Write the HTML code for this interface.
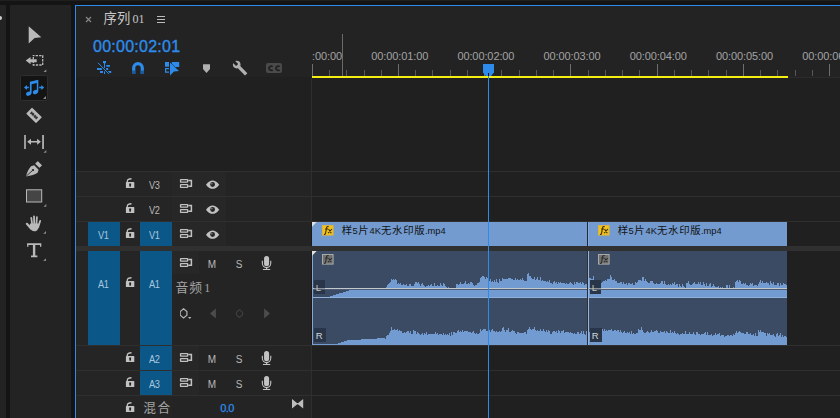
<!DOCTYPE html>
<html><head><meta charset="utf-8">
<style>
html,body{margin:0;padding:0;background:#141414;}
body{width:840px;height:418px;position:relative;overflow:hidden;font-family:"Liberation Sans",sans-serif;}
.abs{position:absolute;}
div{position:absolute;box-sizing:border-box;}
.rl{top:10px;width:80px;text-align:center;font-size:11px;color:#a3a3a3;line-height:12px;white-space:nowrap;letter-spacing:-0.1px;}
.tl{font-size:10px;color:#b8b8b8;line-height:12px;text-align:left;width:32px;letter-spacing:-0.3px;transform:scaleX(0.92);transform-origin:0 0;}
.ms{font-size:10px;color:#b8b8b8;line-height:12px;text-align:center;width:14px;}
.hl{left:76px;width:764px;height:1px;background:#2f2f2f;}
</style></head><body>
<!-- top strip -->
<div style="left:0;top:0;width:840px;height:1px;background:#1f1f1f"></div>
<!-- left partial panel -->
<div style="left:0;top:5px;width:6px;height:413px;background:#232323"></div>
<div style="left:0;top:16px;width:2px;height:4px;background:#cfcfcf;border-radius:0 2px 2px 0"></div>
<!-- tools panel -->
<div style="left:10px;top:5px;width:61px;height:413px;background:#232323"></div>
<!-- timeline panel -->
<div style="left:75px;top:5px;width:770px;height:420px;background:#232323;border:1px solid #2d8ceb"></div>
<!-- track area bg -->
<div style="left:76px;top:77px;width:764px;height:341px;background:#202020"></div>
<div style="left:76px;top:172px;width:235px;height:246px;background:#252525"></div>
<div style="left:172px;top:172px;width:139px;height:246px;background:#242424"></div>
<div style="left:172px;top:172px;width:54px;height:74px;background:#272727"></div>
<div style="left:172px;top:251px;width:27px;height:23px;background:#272727"></div>
<div style="left:172px;top:346px;width:27px;height:49px;background:#272727"></div>
<div style="left:311px;top:78px;width:1px;height:340px;background:#2e2e2e"></div>

<!-- tab header -->
<svg class="abs" style="left:85px;top:16px" width="8" height="8"><path d="M1,1L6,6M6,1L1,6" stroke="#8a8a8a" stroke-width="1.1" fill="none"/></svg>
<svg class="abs" style="left:0;top:0" width="840" height="418" fill="#c8c8c8"><text x="103.59 116.90" y="23.1" font-size="13.3" font-family="'Liberation Sans','Noto Sans CJK SC',sans-serif">序列</text></svg>
<div style="left:132.5px;top:12px;font-family:'Liberation Serif',serif;font-size:12px;color:#c8c8c8;line-height:14px">01</div>
<svg class="abs" style="left:157px;top:15px" width="9" height="9"><path d="M0,1.5H8M0,4.5H8M0,7.5H8" stroke="#bdbdbd" stroke-width="1.1"/></svg>
<div id="tc" style="left:93px;top:37.5px;font-size:16px;color:#2d8ceb;line-height:18px;letter-spacing:0.25px;-webkit-text-stroke:0.35px #2d8ceb">00:00:02:01</div>

<!-- timeline toolbar icons -->
<svg class="abs" style="left:96px;top:60px" width="17" height="16">
 <g fill="#2d8ceb">
 <rect x="8" y="1" width="1" height="13"/>
 <rect x="7" y="1" width="3" height="2.2"/>
 <rect x="10.3" y="5" width="3.6" height="1.8"/>
 <rect x="1" y="8" width="5" height="2"/>
 <rect x="10" y="8" width="2.2" height="2"/>
 <rect x="4" y="11" width="3" height="2"/>
 <rect x="12" y="11" width="3.2" height="2"/>
 </g>
 <path d="M2,2.8L12.8,13.9" stroke="#232323" stroke-width="2.6"/>
 <path d="M2,2.8L12.8,13.9" stroke="#2d8ceb" stroke-width="1"/>
 <rect x="8" y="3" width="1" height="5" fill="#2d8ceb"/>
</svg>
<svg class="abs" style="left:131px;top:61px" width="15" height="14" fill="none">
 <path d="M2.7,13V7A4.3,4.3 0 0 1 11.3,7V13" stroke="#2d8ceb" stroke-width="3.2"/>
 <rect x="1" y="9.6" width="3.4" height="3.4" fill="#1c5a9c"/><rect x="9.6" y="9.6" width="3.4" height="3.4" fill="#1c5a9c"/>
</svg>
<svg class="abs" style="left:164px;top:61px" width="17" height="16">
 <rect x="1" y="1" width="4" height="4.7" fill="#2d8ceb"/>
 <path d="M5,7.7H1.6V11.2H5" fill="none" stroke="#2d8ceb" stroke-width="1.2"/>
 <rect x="7.8" y="1" width="7.4" height="5" fill="#2d8ceb"/>
 <path d="M6,1.5L15,10L10,10.5L6,14.5Z" fill="#2d8ceb" stroke="#232323" stroke-width="1" paint-order="stroke"/>
</svg>
<svg class="abs" style="left:202px;top:64px" width="9" height="10"><path d="M1.3,0.2H7.7Q8,0.2 8,0.6V5L4.5,9L1,5V0.6Q1,0.2 1.3,0.2Z" fill="#b0b0b0"/></svg>
<svg class="abs" style="left:232px;top:60px" width="16" height="16" fill="none">
 <path d="M6.3,6.3L14.2,14.4" stroke="#b0b0b0" stroke-width="3.3"/>
 <circle cx="4.7" cy="4.6" r="3.8" fill="#b0b0b0"/>
 <rect x="-1.5" y="-6" width="3" height="6.6" fill="#232323" transform="translate(4.7,4.6) rotate(-45)"/>
</svg>
<svg class="abs" style="left:266px;top:63px" width="16" height="10">
 <rect x="0" y="0" width="16" height="10" rx="2" fill="#4a4a4a"/>
 <path d="M6.7,3.7A2.25,2.1 0 1 0 6.7,6.8M13.7,3.7A2.25,2.1 0 1 0 13.7,6.8" fill="none" stroke="#202020" stroke-width="1.7"/>
</svg>

<!-- ruler -->
<svg class="abs" style="left:0;top:0" width="840" height="418">
 <rect x="312" y="64" width="1" height="12" fill="#6e6e6e"/><rect x="329" y="70" width="1" height="6" fill="#585858"/><rect x="346" y="70" width="1" height="6" fill="#585858"/><rect x="364" y="70" width="1" height="6" fill="#585858"/><rect x="381" y="70" width="1" height="6" fill="#585858"/><rect x="398" y="64" width="1" height="12" fill="#6e6e6e"/><rect x="415" y="70" width="1" height="6" fill="#585858"/><rect x="432" y="70" width="1" height="6" fill="#585858"/><rect x="450" y="70" width="1" height="6" fill="#585858"/><rect x="467" y="70" width="1" height="6" fill="#585858"/><rect x="484" y="64" width="1" height="12" fill="#6e6e6e"/><rect x="501" y="70" width="1" height="6" fill="#585858"/><rect x="519" y="70" width="1" height="6" fill="#585858"/><rect x="536" y="70" width="1" height="6" fill="#585858"/><rect x="553" y="70" width="1" height="6" fill="#585858"/><rect x="570" y="64" width="1" height="12" fill="#6e6e6e"/><rect x="588" y="70" width="1" height="6" fill="#585858"/><rect x="605" y="70" width="1" height="6" fill="#585858"/><rect x="622" y="70" width="1" height="6" fill="#585858"/><rect x="639" y="70" width="1" height="6" fill="#585858"/><rect x="657" y="64" width="1" height="12" fill="#6e6e6e"/><rect x="674" y="70" width="1" height="6" fill="#585858"/><rect x="691" y="70" width="1" height="6" fill="#585858"/><rect x="708" y="70" width="1" height="6" fill="#585858"/><rect x="726" y="70" width="1" height="6" fill="#585858"/><rect x="743" y="64" width="1" height="12" fill="#6e6e6e"/><rect x="760" y="70" width="1" height="6" fill="#585858"/><rect x="777" y="70" width="1" height="6" fill="#585858"/><rect x="795" y="70" width="1" height="6" fill="#585858"/><rect x="812" y="70" width="1" height="6" fill="#585858"/><rect x="829" y="64" width="1" height="12" fill="#6e6e6e"/>
 <rect x="342" y="34" width="1" height="42" fill="#6a6a6a"/>
 <rect x="312" y="76" width="476" height="2" fill="#f5ee14"/>
 <rect x="788" y="77" width="52" height="1" fill="#2c2c2c"/>
</svg>
<div style="left:312px;top:40px;width:528px;height:30px;overflow:hidden"><div class="rl" style="left:-38.5px">00:00:00:00</div><div class="rl" style="left:47.7px">00:00:01:00</div><div class="rl" style="left:133.9px">00:00:02:00</div><div class="rl" style="left:220.1px">00:00:03:00</div><div class="rl" style="left:306.3px">00:00:04:00</div><div class="rl" style="left:392.5px">00:00:05:00</div><div class="rl" style="left:478.7px">00:00:06:00</div></div>

<!-- track lines -->
<div class="hl" style="top:171px"></div>
<div class="hl" style="top:196px"></div>
<div class="hl" style="top:221px"></div>
<div style="left:76px;top:246px;width:764px;height:5px;background:#303030"></div>
<div class="hl" style="top:345px"></div>
<div class="hl" style="top:370px"></div>
<div class="hl" style="top:395px"></div>

<!-- selected track blocks -->
<div style="left:88px;top:222px;width:32px;height:24px;background:#0b5788"></div>
<div style="left:140px;top:222px;width:32px;height:24px;background:#0b5788"></div>
<div style="left:88px;top:251px;width:32px;height:94px;background:#0b5788"></div>
<div style="left:140px;top:251px;width:32px;height:94px;background:#0b5788"></div>
<div style="left:140px;top:346px;width:32px;height:24px;background:#0b5788"></div>
<div style="left:140px;top:371px;width:32px;height:24px;background:#0b5788"></div>

<div class="tl" style="left:149.0px;top:180px">V3</div>
<div class="tl" style="left:149.0px;top:205px">V2</div>
<div class="tl" style="left:98.2px;top:230px;color:#a9c6de">V1</div>
<div class="tl" style="left:149.0px;top:230px;color:#a9c6de">V1</div>
<div class="tl" style="left:98.2px;top:279px;color:#a9c6de">A1</div>
<div class="tl" style="left:149.0px;top:279px;color:#a9c6de">A1</div>
<div class="tl" style="left:149.0px;top:354px;color:#a9c6de">A2</div>
<div class="tl" style="left:149.0px;top:379px;color:#a9c6de">A3</div>

<svg class="abs" style="left:0;top:0" width="840" height="418">
<defs>
 <g id="lock"><path d="M1.3,4.6V3.3C1.3,1.6 2.9,0.75 5.5,0.75" fill="none" stroke="#c2c2c2" stroke-width="1.3"/><rect x="-0.1" y="4.1" width="8.4" height="5.9" rx="0.6" fill="#c2c2c2"/><path d="M3.2,5.4H5.1V6.7L4.8,8.7H3.5L3.2,6.7Z" fill="#1c1c1c"/></g>
 <g id="sync" fill="none" stroke="#c2c2c2" stroke-width="1.3"><rect x="0.55" y="0.65" width="7.1" height="2.5" rx="0.4"/><rect x="0.55" y="5.55" width="7.1" height="2.8" rx="0.4"/><path d="M8.3,1.5H11.4V7.2H8.3" stroke-width="1.5"/></g>
 <g id="eye"><path d="M0,4.15C2.2,1 4.6,0 6.6,0C8.6,0 11,1 13.2,4.15C11,7.3 8.6,8.3 6.6,8.3C4.6,8.3 2.2,7.3 0,4.15Z" fill="#c2c2c2"/><circle cx="6.6" cy="4" r="2.4" fill="#262626"/><circle cx="5.9" cy="3.3" r="0.8" fill="#8a8a8a"/></g>
 <g id="mic"><rect x="2.05" y="0" width="5.05" height="10.3" rx="2.5" fill="#c2c2c2"/><path d="M0.35,4.8V7.3A4.2,4.3 0 0 0 8.75,7.3V4.8" fill="none" stroke="#c2c2c2" stroke-width="1.1"/><rect x="4" y="12" width="1.2" height="1.3" fill="#c2c2c2"/><rect x="0.9" y="13" width="7.3" height="1" fill="#c2c2c2"/></g>
</defs>
<use href="#lock" x="126" y="178"/><use href="#lock" x="126" y="203"/><use href="#lock" x="126" y="228"/>
<use href="#lock" x="126" y="277"/><use href="#lock" x="126" y="352"/><use href="#lock" x="126" y="377"/><use href="#lock" x="126" y="402"/>
<use href="#sync" x="180" y="179"/><use href="#sync" x="180" y="204"/><use href="#sync" x="180" y="229"/>
<use href="#sync" x="180" y="258"/><use href="#sync" x="180" y="353"/><use href="#sync" x="180" y="378"/>
<use href="#eye" x="206" y="180.5"/><use href="#eye" x="206" y="205.5"/><use href="#eye" x="206" y="230.5"/>
<use href="#mic" x="262" y="256"/><use href="#mic" x="262" y="351"/><use href="#mic" x="262" y="376"/>
</svg>
<div class="ms" style="left:205px;top:259px">M</div><div class="ms" style="left:232px;top:259px">S</div>
<div class="ms" style="left:205px;top:354px">M</div><div class="ms" style="left:232px;top:354px">S</div>
<div class="ms" style="left:205px;top:379px">M</div><div class="ms" style="left:232px;top:379px">S</div>

<svg class="abs" style="left:0;top:0" width="840" height="418" fill="#a4a4a4"><text x="175.40 189.13" y="291.96" font-size="12.8" font-family="'Liberation Sans','Noto Sans CJK SC',sans-serif">音频</text></svg>
<div style="left:204.3px;top:281px;font-family:'Liberation Serif',serif;font-size:12px;color:#a4a4a4;line-height:14px">1</div>
<!-- keyframe controls -->
<svg class="abs" style="left:180px;top:307px" width="100" height="14">
 <path d="M3.55,1.7L6.9,4.5V8.1L3.55,10.9L0.2,8.1V4.5Z" fill="none" stroke="#b4b4b4" stroke-width="1.2"/>
 <path d="M8,10H11.4L9.7,12Z" fill="#b4b4b4"/>
 <path d="M35.9,1.5V11.6L30,6.55Z" fill="#4c4c4c"/>
 <path d="M59.45,2.6L62.5,5.2V7.8L59.45,10.4L56.4,7.8V5.2Z" fill="none" stroke="#3e3e3e" stroke-width="1.2"/>
 <path d="M84.1,1.5V11.6L90,6.55Z" fill="#4c4c4c"/>
</svg>
<svg class="abs" style="left:0;top:0" width="840" height="418" fill="#a4a4a4"><text x="143.35 157.39" y="411.6" font-size="12.7" font-family="'Liberation Sans','Noto Sans CJK SC',sans-serif">混合</text></svg>
<div style="left:220.3px;top:402px;font-size:11px;color:#2d8ceb;line-height:12px;letter-spacing:-0.6px;-webkit-text-stroke:0.25px #2d8ceb">0.0</div>
<svg class="abs" style="left:291.9px;top:399px" width="12" height="10"><path d="M0,0L5.3,4.2V5.2L0,9.4ZM11.2,0L5.9,4.2V5.2L11.2,9.4Z" fill="#bdbdbd"/><rect x="5" y="4.1" width="1.2" height="1.2" fill="#bdbdbd"/></svg>

<!-- video clips -->
<div style="left:311px;top:222px;width:1px;height:24px;background:#1a1a1a"></div><div style="left:311px;top:251px;width:1px;height:94px;background:#1a1a1a"></div>
<div style="left:312px;top:222px;width:276px;height:24px;background:#739bd0"></div>
<div style="left:588px;top:222px;width:199px;height:24px;background:#739bd0"></div>
<div style="left:587px;top:222px;width:1px;height:24px;background:#232a35"></div><div style="left:588px;top:222px;width:1px;height:24px;background:#86aadb"></div>
<svg class="abs" style="left:312px;top:222px" width="6" height="6"><path d="M0,0H4.7L0,4.7Z" fill="#e2e2e2"/></svg>
<!-- fx badges -->
<svg class="abs" style="left:322.2px;top:225.1px" width="13" height="12"><rect x="0.5" y="0.5" width="10.6" height="9.6" fill="#f2c11a" stroke="#d9b443"/><path d="M6.7,1.7C5.3,1.1 4.7,1.9 4.5,3.2L3.6,8C3.4,9.2 2.9,9.6 2,9.3M3.1,4H6M6.5,4L9.3,8.2M9.9,4L6.1,8.2" fill="none" stroke="#3d2f05" stroke-width="1.1"/></svg>
<svg class="abs" style="left:598.2px;top:225.1px" width="13" height="12"><rect x="0.5" y="0.5" width="10.6" height="9.6" fill="#f2c11a" stroke="#d9b443"/><path d="M6.7,1.7C5.3,1.1 4.7,1.9 4.5,3.2L3.6,8C3.4,9.2 2.9,9.6 2,9.3M3.1,4H6M6.5,4L9.3,8.2M9.9,4L6.1,8.2" fill="none" stroke="#3d2f05" stroke-width="1.1"/></svg>

<!-- audio clips -->
<div style="left:312px;top:251px;width:475px;height:94px;background:#3a4b63"></div>
<svg class="abs" style="left:0;top:0" width="840" height="418" shape-rendering="crispEdges">
 <path d="M312,298L312,297.0L313,297.0L313,297.0L314,297.0L314,297.0L315,297.0L315,297.0L316,297.0L316,297.0L317,297.0L317,297.0L318,297.0L318,297.0L319,297.0L319,297.0L320,297.0L320,297.0L321,297.0L321,297.0L322,297.0L322,297.0L323,297.0L323,297.0L324,297.0L324,297.0L325,297.0L325,297.0L326,297.0L326,297.0L327,297.0L327,297.0L328,297.0L328,296.9L329,296.9L329,296.6L330,296.6L330,296.3L331,296.3L331,295.9L332,295.9L332,295.6L333,295.6L333,295.3L334,295.3L334,295.0L335,295.0L335,294.7L336,294.7L336,294.4L337,294.4L337,294.1L338,294.1L338,293.8L339,293.8L339,293.4L340,293.4L340,293.1L341,293.1L341,292.8L342,292.8L342,292.5L343,292.5L343,292.2L344,292.2L344,291.9L345,291.9L345,291.6L346,291.6L346,291.3L347,291.3L347,290.9L348,290.9L348,290.6L349,290.6L349,290.3L350,290.3L350,290.0L351,290.0L351,290.0L352,290.0L352,290.0L353,290.0L353,290.0L354,290.0L354,290.0L355,290.0L355,290.0L356,290.0L356,290.0L357,290.0L357,290.0L358,290.0L358,290.0L359,290.0L359,290.0L360,290.0L360,290.0L361,290.0L361,290.0L362,290.0L362,290.0L363,290.0L363,290.0L364,290.0L364,290.0L365,290.0L365,290.0L366,290.0L366,290.0L367,290.0L367,290.0L368,290.0L368,290.0L369,290.0L369,290.0L370,290.0L370,290.0L371,290.0L371,290.0L372,290.0L372,290.0L373,290.0L373,290.0L374,290.0L374,290.0L375,290.0L375,290.0L376,290.0L376,290.0L377,290.0L377,290.0L378,290.0L378,290.0L379,290.0L379,290.0L380,290.0L380,290.0L381,290.0L381,290.0L382,290.0L382,290.0L383,290.0L383,290.0L384,290.0L384,290.0L385,290.0L385,289.7L386,289.7L386,286.9L387,286.9L387,284.9L388,284.9L388,284.3L389,284.3L389,282.8L390,282.8L390,282.3L391,282.3L391,279.3L392,279.3L392,279.6L393,279.6L393,279.1L394,279.1L394,280.0L395,280.0L395,279.4L396,279.4L396,279.8L397,279.8L397,283.9L398,283.9L398,283.2L399,283.2L399,284.0L400,284.0L400,283.3L401,283.3L401,284.9L402,284.9L402,285.1L403,285.1L403,283.8L404,283.8L404,285.3L405,285.3L405,285.1L406,285.1L406,283.8L407,283.8L407,286.1L408,286.1L408,285.5L409,285.5L409,284.4L410,284.4L410,283.7L411,283.7L411,285.5L412,285.5L412,285.8L413,285.8L413,285.7L414,285.7L414,283.6L415,283.6L415,282.0L416,282.0L416,282.1L417,282.1L417,282.7L418,282.7L418,282.0L419,282.0L419,284.3L420,284.3L420,285.6L421,285.6L421,284.2L422,284.2L422,283.3L423,283.3L423,285.2L424,285.2L424,285.7L425,285.7L425,286.7L426,286.7L426,285.7L427,285.7L427,285.7L428,285.7L428,285.3L429,285.3L429,285.8L430,285.8L430,284.9L431,284.9L431,283.6L432,283.6L432,285.7L433,285.7L433,285.5L434,285.5L434,282.6L435,282.6L435,285.8L436,285.8L436,285.8L437,285.8L437,284.8L438,284.8L438,285.9L439,285.9L439,285.5L440,285.5L440,282.7L441,282.7L441,285.1L442,285.1L442,285.5L443,285.5L443,283.4L444,283.4L444,283.9L445,283.9L445,286.3L446,286.3L446,287.0L447,287.0L447,288.3L448,288.3L448,287.4L449,287.4L449,288.5L450,288.5L450,287.9L451,287.9L451,288.0L452,288.0L452,288.1L453,288.1L453,288.0L454,288.0L454,288.1L455,288.1L455,289.0L456,289.0L456,283.8L457,283.8L457,283.9L458,283.9L458,285.4L459,285.4L459,284.0L460,284.0L460,281.8L461,281.8L461,284.0L462,284.0L462,284.0L463,284.0L463,283.8L464,283.8L464,282.8L465,282.8L465,281.1L466,281.1L466,283.7L467,283.7L467,284.0L468,284.0L468,283.3L469,283.3L469,284.1L470,284.1L470,282.3L471,282.3L471,282.2L472,282.2L472,282.6L473,282.6L473,284.9L474,284.9L474,285.9L475,285.9L475,285.4L476,285.4L476,285.4L477,285.4L477,282.5L478,282.5L478,282.7L479,282.7L479,282.4L480,282.4L480,278.2L481,278.2L481,277.2L482,277.2L482,276.4L483,276.4L483,275.7L484,275.7L484,277.2L485,277.2L485,279.0L486,279.0L486,276.6L487,276.6L487,278.2L488,278.2L488,280.6L489,280.6L489,281.0L490,281.0L490,278.5L491,278.5L491,282.0L492,282.0L492,280.8L493,280.8L493,282.4L494,282.4L494,279.5L495,279.5L495,282.3L496,282.3L496,278.9L497,278.9L497,281.9L498,281.9L498,283.1L499,283.1L499,278.7L500,278.7L500,281.2L501,281.2L501,281.1L502,281.1L502,277.6L503,277.6L503,278.6L504,278.6L504,278.7L505,278.7L505,278.7L506,278.7L506,278.8L507,278.8L507,278.5L508,278.5L508,277.8L509,277.8L509,278.4L510,278.4L510,278.2L511,278.2L511,279.2L512,279.2L512,278.7L513,278.7L513,279.5L514,279.5L514,279.6L515,279.6L515,278.0L516,278.0L516,279.7L517,279.7L517,279.2L518,279.2L518,280.3L519,280.3L519,280.4L520,280.4L520,278.7L521,278.7L521,280.0L522,280.0L522,278.3L523,278.3L523,280.3L524,280.3L524,281.0L525,281.0L525,281.4L526,281.4L526,281.3L527,281.3L527,274.2L528,274.2L528,273.2L529,273.2L529,275.9L530,275.9L530,276.0L531,276.0L531,277.9L532,277.9L532,278.5L533,278.5L533,279.0L534,279.0L534,277.2L535,277.2L535,279.5L536,279.5L536,279.3L537,279.3L537,277.2L538,277.2L538,280.0L539,280.0L539,279.9L540,279.9L540,277.0L541,277.0L541,280.7L542,280.7L542,280.1L543,280.1L543,281.1L544,281.1L544,280.6L545,280.6L545,280.6L546,280.6L546,281.8L547,281.8L547,280.7L548,280.7L548,282.2L549,282.2L549,280.3L550,280.3L550,282.6L551,282.6L551,282.7L552,282.7L552,283.6L553,283.6L553,282.3L554,282.3L554,280.6L555,280.6L555,282.9L556,282.9L556,282.0L557,282.0L557,284.1L558,284.1L558,281.7L559,281.7L559,283.3L560,283.3L560,282.1L561,282.1L561,283.4L562,283.4L562,283.4L563,283.4L563,282.8L564,282.8L564,282.5L565,282.5L565,284.3L566,284.3L566,282.7L567,282.7L567,283.5L568,283.5L568,283.6L569,283.6L569,283.3L570,283.3L570,281.7L571,281.7L571,282.9L572,282.9L572,284.3L573,284.3L573,284.5L574,284.5L574,281.9L575,281.9L575,283.6L576,283.6L576,281.7L577,281.7L577,281.5L578,281.5L578,283.0L579,283.0L579,283.4L580,283.4L580,282.3L581,282.3L581,283.5L582,283.5L582,282.2L583,282.2L583,283.4L584,283.4L584,284.9L585,284.9L585,283.9L586,283.9L586,283.8L587,283.8L587,284.0L588,284.0L588,275.9L589,275.9L589,278.0L590,278.0L590,278.3L591,278.3L591,278.8L592,278.8L592,279.0L593,279.0L593,276.1L594,276.1L594,279.6L595,279.6L595,279.8L596,279.8L596,280.4L597,280.4L597,280.0L598,280.0L598,280.9L599,280.9L599,281.3L600,281.3L600,281.6L601,281.6L601,282.9L602,282.9L602,281.9L603,281.9L603,281.3L604,281.3L604,280.5L605,280.5L605,280.2L606,280.2L606,281.0L607,281.0L607,278.6L608,278.6L608,278.8L609,278.8L609,278.7L610,278.7L610,275.1L611,275.1L611,276.9L612,276.9L612,279.5L613,279.5L613,279.6L614,279.6L614,279.0L615,279.0L615,280.9L616,280.9L616,280.7L617,280.7L617,283.4L618,283.4L618,282.8L619,282.8L619,283.1L620,283.1L620,282.4L621,282.4L621,282.3L622,282.3L622,284.1L623,284.1L623,282.0L624,282.0L624,283.6L625,283.6L625,284.2L626,284.2L626,282.8L627,282.8L627,284.7L628,284.7L628,282.9L629,282.9L629,282.9L630,282.9L630,284.0L631,284.0L631,284.1L632,284.1L632,282.8L633,282.8L633,284.5L634,284.5L634,284.8L635,284.8L635,282.2L636,282.2L636,283.2L637,283.2L637,282.3L638,282.3L638,280.0L639,280.0L639,279.6L640,279.6L640,279.9L641,279.9L641,280.7L642,280.7L642,277.4L643,277.4L643,277.2L644,277.2L644,281.1L645,281.1L645,279.2L646,279.2L646,281.3L647,281.3L647,282.3L648,282.3L648,282.6L649,282.6L649,282.8L650,282.8L650,280.7L651,280.7L651,280.8L652,280.8L652,280.5L653,280.5L653,283.3L654,283.3L654,283.8L655,283.8L655,283.7L656,283.7L656,283.2L657,283.2L657,284.0L658,284.0L658,283.8L659,283.8L659,284.1L660,284.1L660,282.7L661,282.7L661,281.2L662,281.2L662,281.4L663,281.4L663,283.9L664,283.9L664,280.8L665,280.8L665,284.1L666,284.1L666,285.3L667,285.3L667,284.5L668,284.5L668,284.4L669,284.4L669,284.6L670,284.6L670,284.1L671,284.1L671,284.6L672,284.6L672,282.5L673,282.5L673,284.0L674,284.0L674,282.4L675,282.4L675,284.9L676,284.9L676,284.0L677,284.0L677,284.0L678,284.0L678,286.9L679,286.9L679,284.2L680,284.2L680,285.7L681,285.7L681,286.5L682,286.5L682,283.7L683,283.7L683,286.0L684,286.0L684,286.8L685,286.8L685,287.6L686,287.6L686,283.3L687,283.3L687,282.7L688,282.7L688,280.7L689,280.7L689,284.0L690,284.0L690,284.6L691,284.6L691,284.5L692,284.5L692,283.8L693,283.8L693,283.0L694,283.0L694,282.2L695,282.2L695,283.7L696,283.7L696,283.8L697,283.8L697,284.3L698,284.3L698,282.1L699,282.1L699,283.7L700,283.7L700,282.0L701,282.0L701,284.6L702,284.6L702,284.5L703,284.5L703,281.9L704,281.9L704,283.7L705,283.7L705,285.5L706,285.5L706,282.9L707,282.9L707,285.7L708,285.7L708,285.6L709,285.6L709,283.9L710,283.9L710,283.0L711,283.0L711,286.5L712,286.5L712,285.8L713,285.8L713,283.7L714,283.7L714,285.6L715,285.6L715,286.5L716,286.5L716,287.2L717,287.2L717,287.2L718,287.2L718,286.1L719,286.1L719,287.6L720,287.6L720,286.5L721,286.5L721,288.8L722,288.8L722,287.0L723,287.0L723,287.5L724,287.5L724,287.8L725,287.8L725,287.8L726,287.8L726,284.8L727,284.8L727,285.4L728,285.4L728,288.0L729,288.0L729,284.9L730,284.9L730,289.0L731,289.0L731,287.5L732,287.5L732,287.8L733,287.8L733,286.9L734,286.9L734,289.0L735,289.0L735,281.8L736,281.8L736,280.8L737,280.8L737,280.4L738,280.4L738,282.1L739,282.1L739,279.7L740,279.7L740,281.0L741,281.0L741,283.5L742,283.5L742,283.6L743,283.6L743,283.3L744,283.3L744,284.2L745,284.2L745,283.1L746,283.1L746,284.7L747,284.7L747,284.8L748,284.8L748,286.1L749,286.1L749,285.3L750,285.3L750,282.7L751,282.7L751,283.9L752,283.9L752,282.8L753,282.8L753,286.0L754,286.0L754,285.3L755,285.3L755,284.9L756,284.9L756,285.2L757,285.2L757,285.7L758,285.7L758,283.8L759,283.8L759,281.5L760,281.5L760,280.3L761,280.3L761,283.1L762,283.1L762,280.9L763,280.9L763,283.1L764,283.1L764,282.7L765,282.7L765,283.2L766,283.2L766,281.6L767,281.6L767,283.2L768,283.2L768,282.9L769,282.9L769,285.1L770,285.1L770,281.3L771,281.3L771,282.6L772,282.6L772,284.4L773,284.4L773,281.6L774,281.6L774,284.9L775,284.9L775,285.0L776,285.0L776,285.4L777,285.4L777,282.5L778,282.5L778,283.4L779,283.4L779,285.5L780,285.5L780,282.5L781,282.5L781,285.4L782,285.4L782,285.4L783,285.4L783,283.0L784,283.0L784,283.9L785,283.9L785,283.9L786,283.9L786,285.1L787,285.1L787,298Z" fill="#719bd1"/>
 <path d="M312,345L312,344.0L313,344.0L313,344.0L314,344.0L314,344.0L315,344.0L315,344.0L316,344.0L316,344.0L317,344.0L317,344.0L318,344.0L318,344.0L319,344.0L319,344.0L320,344.0L320,344.0L321,344.0L321,344.0L322,344.0L322,344.0L323,344.0L323,344.0L324,344.0L324,344.0L325,344.0L325,344.0L326,344.0L326,344.0L327,344.0L327,344.0L328,344.0L328,344.0L329,344.0L329,344.0L330,344.0L330,344.0L331,344.0L331,344.0L332,344.0L332,344.0L333,344.0L333,344.0L334,344.0L334,344.0L335,344.0L335,344.0L336,344.0L336,343.9L337,343.9L337,343.6L338,343.6L338,343.3L339,343.3L339,342.9L340,342.9L340,342.6L341,342.6L341,342.3L342,342.3L342,342.0L343,342.0L343,341.7L344,341.7L344,341.4L345,341.4L345,341.1L346,341.1L346,340.7L347,340.7L347,340.4L348,340.4L348,340.3L349,340.3L349,340.2L350,340.2L350,340.1L351,340.1L351,340.1L352,340.1L352,340.0L353,340.0L353,339.9L354,339.9L354,339.9L355,339.9L355,339.8L356,339.8L356,339.7L357,339.7L357,339.7L358,339.7L358,339.6L359,339.6L359,339.6L360,339.6L360,339.5L361,339.5L361,339.4L362,339.4L362,339.4L363,339.4L363,339.3L364,339.3L364,339.2L365,339.2L365,339.2L366,339.2L366,339.1L367,339.1L367,339.0L368,339.0L368,339.0L369,339.0L369,338.9L370,338.9L370,338.8L371,338.8L371,338.8L372,338.8L372,338.7L373,338.7L373,338.7L374,338.7L374,338.6L375,338.6L375,338.5L376,338.5L376,338.5L377,338.5L377,338.4L378,338.4L378,338.3L379,338.3L379,338.3L380,338.3L380,338.2L381,338.2L381,338.1L382,338.1L382,338.1L383,338.1L383,338.0L384,338.0L384,337.9L385,337.9L385,338.5L386,338.5L386,335.5L387,335.5L387,335.1L388,335.1L388,334.7L389,334.7L389,332.5L390,332.5L390,330.9L391,330.9L391,327.1L392,327.1L392,330.3L393,330.3L393,329.9L394,329.9L394,328.5L395,328.5L395,330.4L396,330.4L396,329.7L397,329.7L397,329.4L398,329.4L398,331.2L399,331.2L399,329.6L400,329.6L400,331.4L401,331.4L401,330.7L402,330.7L402,332.5L403,332.5L403,332.7L404,332.7L404,331.8L405,331.8L405,332.5L406,332.5L406,332.3L407,332.3L407,330.9L408,330.9L408,330.8L409,330.8L409,332.7L410,332.7L410,331.0L411,331.0L411,333.6L412,333.6L412,333.7L413,333.7L413,330.4L414,330.4L414,330.9L415,330.9L415,331.4L416,331.4L416,334.0L417,334.0L417,332.1L418,332.1L418,333.2L419,333.2L419,334.4L420,334.4L420,334.6L421,334.6L421,334.4L422,334.4L422,333.1L423,333.1L423,334.5L424,334.5L424,333.0L425,333.0L425,334.2L426,334.2L426,332.3L427,332.3L427,335.4L428,335.4L428,333.9L429,333.9L429,334.0L430,334.0L430,334.3L431,334.3L431,333.8L432,333.8L432,334.0L433,334.0L433,334.1L434,334.1L434,334.0L435,334.0L435,331.8L436,331.8L436,334.0L437,334.0L437,332.7L438,332.7L438,334.5L439,334.5L439,334.0L440,334.0L440,334.1L441,334.1L441,333.9L442,333.9L442,334.6L443,334.6L443,333.3L444,333.3L444,334.7L445,334.7L445,334.3L446,334.3L446,334.7L447,334.7L447,333.9L448,333.9L448,334.8L449,334.8L449,332.6L450,332.6L450,335.8L451,335.8L451,331.8L452,331.8L452,335.2L453,335.2L453,332.0L454,332.0L454,332.1L455,332.1L455,332.7L456,332.7L456,333.0L457,333.0L457,331.3L458,331.3L458,329.5L459,329.5L459,331.8L460,331.8L460,331.2L461,331.2L461,332.1L462,332.1L462,330.4L463,330.4L463,332.3L464,332.3L464,331.4L465,331.4L465,331.0L466,331.0L466,331.3L467,331.3L467,331.3L468,331.3L468,332.1L469,332.1L469,332.2L470,332.2L470,332.2L471,332.2L471,332.9L472,332.9L472,332.3L473,332.3L473,331.1L474,331.1L474,332.6L475,332.6L475,333.6L476,333.6L476,333.4L477,333.4L477,333.5L478,333.5L478,333.8L479,333.8L479,333.3L480,333.3L480,328.7L481,328.7L481,330.8L482,330.8L482,330.0L483,330.0L483,328.7L484,328.7L484,328.5L485,328.5L485,329.3L486,329.3L486,331.2L487,331.2L487,330.7L488,330.7L488,328.6L489,328.6L489,329.5L490,329.5L490,331.8L491,331.8L491,329.9L492,329.9L492,329.0L493,329.0L493,330.6L494,330.6L494,331.1L495,331.1L495,331.8L496,331.8L496,331.2L497,331.2L497,332.0L498,332.0L498,332.0L499,332.0L499,330.5L500,330.5L500,332.0L501,332.0L501,330.9L502,330.9L502,328.4L503,328.4L503,326.9L504,326.9L504,329.5L505,329.5L505,331.6L506,331.6L506,330.4L507,330.4L507,329.6L508,329.6L508,328.4L509,328.4L509,331.6L510,331.6L510,331.5L511,331.5L511,331.3L512,331.3L512,330.0L513,330.0L513,331.1L514,331.1L514,331.4L515,331.4L515,333.3L516,333.3L516,333.7L517,333.7L517,331.6L518,331.6L518,332.1L519,332.1L519,333.0L520,333.0L520,332.7L521,332.7L521,333.2L522,333.2L522,333.2L523,333.2L523,333.2L524,333.2L524,332.3L525,332.3L525,332.2L526,332.2L526,333.6L527,333.6L527,330.1L528,330.1L528,329.4L529,329.4L529,326.9L530,326.9L530,329.2L531,329.2L531,329.9L532,329.9L532,329.0L533,329.0L533,328.8L534,328.8L534,327.1L535,327.1L535,330.2L536,330.2L536,330.5L537,330.5L537,330.2L538,330.2L538,330.8L539,330.8L539,331.0L540,331.0L540,329.0L541,329.0L541,331.1L542,331.1L542,330.6L543,330.6L543,329.3L544,329.3L544,331.4L545,331.4L545,331.8L546,331.8L546,329.9L547,329.9L547,332.1L548,332.1L548,330.4L549,330.4L549,330.6L550,330.6L550,333.5L551,333.5L551,333.5L552,333.5L552,332.3L553,332.3L553,331.1L554,331.1L554,331.0L555,331.0L555,331.8L556,331.8L556,330.6L557,330.6L557,332.6L558,332.6L558,329.5L559,329.5L559,331.1L560,331.1L560,332.7L561,332.7L561,331.0L562,331.0L562,331.1L563,331.1L563,330.3L564,330.3L564,332.9L565,332.9L565,331.7L566,331.7L566,331.6L567,331.6L567,332.4L568,332.4L568,331.5L569,331.5L569,332.6L570,332.6L570,332.1L571,332.1L571,333.1L572,333.1L572,333.2L573,333.2L573,334.2L574,334.2L574,333.3L575,333.3L575,334.0L576,334.0L576,334.4L577,334.4L577,331.8L578,331.8L578,331.8L579,331.8L579,333.5L580,333.5L580,333.1L581,333.1L581,331.2L582,331.2L582,333.5L583,333.5L583,330.6L584,330.6L584,333.6L585,333.6L585,334.6L586,334.6L586,331.2L587,331.2L587,332.4L588,332.4L588,329.8L589,329.8L589,331.8L590,331.8L590,328.9L591,328.9L591,330.7L592,330.7L592,331.1L593,331.1L593,330.9L594,330.9L594,330.9L595,330.9L595,328.0L596,328.0L596,328.9L597,328.9L597,331.5L598,331.5L598,331.0L599,331.0L599,331.4L600,331.4L600,330.9L601,330.9L601,330.1L602,330.1L602,329.2L603,329.2L603,331.4L604,331.4L604,329.2L605,329.2L605,331.1L606,331.1L606,330.2L607,330.2L607,330.7L608,330.7L608,330.3L609,330.3L609,330.3L610,330.3L610,330.4L611,330.4L611,329.2L612,329.2L612,331.0L613,331.0L613,331.2L614,331.2L614,329.7L615,329.7L615,330.2L616,330.2L616,331.2L617,331.2L617,330.1L618,330.1L618,330.3L619,330.3L619,332.1L620,332.1L620,329.5L621,329.5L621,332.1L622,332.1L622,332.5L623,332.5L623,331.9L624,331.9L624,331.0L625,331.0L625,332.7L626,332.7L626,333.2L627,333.2L627,331.9L628,331.9L628,333.4L629,333.4L629,331.6L630,331.6L630,333.7L631,333.7L631,331.1L632,331.1L632,333.9L633,333.9L633,332.5L634,332.5L634,334.2L635,334.2L635,333.7L636,333.7L636,332.6L637,332.6L637,332.7L638,332.7L638,329.2L639,329.2L639,330.2L640,330.2L640,329.7L641,329.7L641,327.4L642,327.4L642,330.3L643,330.3L643,332.2L644,332.2L644,332.5L645,332.5L645,333.4L646,333.4L646,332.3L647,332.3L647,331.2L648,331.2L648,331.5L649,331.5L649,332.8L650,332.8L650,332.3L651,332.3L651,329.9L652,329.9L652,331.7L653,331.7L653,332.3L654,332.3L654,331.0L655,331.0L655,330.8L656,330.8L656,330.3L657,330.3L657,331.4L658,331.4L658,332.5L659,332.5L659,332.8L660,332.8L660,330.7L661,330.7L661,331.5L662,331.5L662,332.3L663,332.3L663,331.5L664,331.5L664,331.3L665,331.3L665,332.7L666,332.7L666,330.7L667,330.7L667,332.1L668,332.1L668,332.8L669,332.8L669,332.9L670,332.9L670,329.9L671,329.9L671,333.2L672,333.2L672,332.4L673,332.4L673,332.6L674,332.6L674,331.2L675,331.2L675,333.2L676,333.2L676,333.6L677,333.6L677,333.3L678,333.3L678,333.8L679,333.8L679,334.5L680,334.5L680,333.7L681,333.7L681,333.9L682,333.9L682,333.4L683,333.4L683,333.6L684,333.6L684,333.9L685,333.9L685,330.9L686,330.9L686,334.0L687,334.0L687,333.7L688,333.7L688,334.1L689,334.1L689,331.9L690,331.9L690,333.6L691,333.6L691,334.1L692,334.1L692,333.9L693,333.9L693,332.0L694,332.0L694,333.7L695,333.7L695,334.5L696,334.5L696,332.0L697,332.0L697,332.0L698,332.0L698,334.1L699,334.1L699,334.0L700,334.0L700,334.6L701,334.6L701,334.4L702,334.4L702,334.4L703,334.4L703,334.2L704,334.2L704,333.4L705,333.4L705,331.8L706,331.8L706,334.9L707,334.9L707,332.1L708,332.1L708,335.0L709,335.0L709,334.7L710,334.7L710,335.1L711,335.1L711,333.7L712,333.7L712,336.2L713,336.2L713,335.1L714,335.1L714,335.0L715,335.0L715,332.5L716,332.5L716,335.3L717,335.3L717,334.2L718,334.2L718,334.0L719,334.0L719,333.4L720,333.4L720,335.5L721,335.5L721,334.7L722,334.7L722,335.1L723,335.1L723,334.7L724,334.7L724,336.6L725,336.6L725,336.0L726,336.0L726,336.2L727,336.2L727,335.1L728,335.1L728,335.0L729,335.0L729,335.9L730,335.9L730,335.3L731,335.3L731,334.6L732,334.6L732,335.6L733,335.6L733,333.8L734,333.8L734,334.6L735,334.6L735,332.8L736,332.8L736,331.4L737,331.4L737,332.7L738,332.7L738,332.3L739,332.3L739,331.4L740,331.4L740,331.7L741,331.7L741,333.2L742,333.2L742,333.2L743,333.2L743,332.9L744,332.9L744,333.8L745,333.8L745,333.5L746,333.5L746,331.8L747,331.8L747,331.9L748,331.9L748,333.6L749,333.6L749,333.7L750,333.7L750,333.2L751,333.2L751,334.5L752,334.5L752,334.8L753,334.8L753,334.0L754,334.0L754,335.6L755,335.6L755,333.1L756,333.1L756,336.1L757,336.1L757,335.9L758,335.9L758,329.8L759,329.8L759,331.6L760,331.6L760,330.3L761,330.3L761,332.3L762,332.3L762,332.1L763,332.1L763,332.4L764,332.4L764,332.7L765,332.7L765,333.4L766,333.4L766,335.6L767,335.6L767,332.8L768,332.8L768,333.7L769,333.7L769,333.0L770,333.0L770,334.6L771,334.6L771,335.4L772,335.4L772,335.4L773,335.4L773,334.4L774,334.4L774,335.8L775,335.8L775,336.9L776,336.9L776,333.7L777,333.7L777,333.0L778,333.0L778,336.1L779,336.1L779,335.0L780,335.0L780,332.7L781,332.7L781,336.7L782,336.7L782,334.9L783,334.9L783,337.3L784,337.3L784,336.4L785,336.4L785,336.4L786,336.4L786,336.5L787,336.5L787,345Z" fill="#719bd1"/>
 <rect x="313.6" y="280" width="11.2" height="14" fill="#293649"/><rect x="313.6" y="328" width="12.4" height="13.7" fill="#293649"/><rect x="589.6" y="280" width="11.2" height="14" fill="#293649"/><rect x="589.6" y="328" width="12.4" height="13.7" fill="#293649"/>
 <rect x="312" y="297" width="475" height="1" fill="#8fb0da"/>
 <rect x="313" y="288" width="474" height="1" fill="#c3c6ca"/><rect x="313.6" y="288" width="11.2" height="1" fill="#8f9297"/><rect x="589.6" y="288" width="11.2" height="1" fill="#8f9297"/>
 <rect x="312" y="289" width="475" height="1" fill="#4b5c77"/>
 <rect x="312" y="251" width="1" height="94" fill="#86a7d3"/>
 <rect x="587" y="251" width="1" height="94" fill="#2a2f38"/>
 <rect x="588" y="251" width="1" height="94" fill="#9ab3d6"/>
</svg>
<svg class="abs" style="left:312px;top:251px" width="6" height="6"><path d="M0,0H4.7L0,4.7Z" fill="#e2e2e2"/></svg>
<svg class="abs" style="left:322.2px;top:254.2px" width="13" height="12"><rect x="0.5" y="0.5" width="10.6" height="9.6" fill="#707070" stroke="#a9a9a9"/><path d="M6.7,1.7C5.3,1.1 4.7,1.9 4.5,3.2L3.6,8C3.4,9.2 2.9,9.6 2,9.3M3.1,4H6M6.5,4L9.3,8.2M9.9,4L6.1,8.2" fill="none" stroke="#2e2e2e" stroke-width="1.1"/></svg>
<svg class="abs" style="left:598.2px;top:254.2px" width="13" height="12"><rect x="0.5" y="0.5" width="10.6" height="9.6" fill="#707070" stroke="#a9a9a9"/><path d="M6.7,1.7C5.3,1.1 4.7,1.9 4.5,3.2L3.6,8C3.4,9.2 2.9,9.6 2,9.3M3.1,4H6M6.5,4L9.3,8.2M9.9,4L6.1,8.2" fill="none" stroke="#2e2e2e" stroke-width="1.1"/></svg>
<!-- L/R labels -->
<div style="left:315.8px;top:281.8px;font-size:9.5px;line-height:12px;color:#c9c2b4">L</div><div style="left:315.7px;top:329.6px;font-size:9.5px;line-height:12px;color:#d6d6d6">R</div>
<div style="left:591.8px;top:281.8px;font-size:9.5px;line-height:12px;color:#c9c2b4">L</div><div style="left:591.7px;top:329.6px;font-size:9.5px;line-height:12px;color:#d6d6d6">R</div>

<!-- clip names -->
<svg class="abs" style="left:0;top:0" width="840" height="418" fill="#121212" font-size="10.4" font-family="'Liberation Sans','Noto Sans CJK SC',sans-serif"><text x="341.78" y="233.95">样</text><text x="358.20" y="233.95">片</text><text x="380.99 392.09 403.28 414.19" y="233.95">无水印版</text></svg><div style="left:352.4px;top:224.5px;font-size:9.3px;line-height:12px;color:#121212">5</div><div style="left:369.6px;top:224.5px;font-size:9.3px;line-height:12px;color:#121212">4K</div><div style="left:424.9px;top:224.5px;font-size:9.3px;line-height:12px;color:#121212">.mp4</div>
<svg class="abs" style="left:0;top:0" width="840" height="418" fill="#121212" font-size="10.4" font-family="'Liberation Sans','Noto Sans CJK SC',sans-serif"><text x="617.78" y="233.95">样</text><text x="634.20" y="233.95">片</text><text x="656.99 668.09 679.28 690.19" y="233.95">无水印版</text></svg><div style="left:628.4px;top:224.5px;font-size:9.3px;line-height:12px;color:#121212">5</div><div style="left:645.6px;top:224.5px;font-size:9.3px;line-height:12px;color:#121212">4K</div><div style="left:700.9px;top:224.5px;font-size:9.3px;line-height:12px;color:#121212">.mp4</div>

<!-- playhead -->
<div style="left:488px;top:76px;width:1px;height:342px;background:#2d8ceb"></div>
<svg class="abs" style="left:483px;top:64px" width="11" height="12"><path d="M0,0H11V8.3L8.2,12H2.8L0,8.3Z" fill="#2d8ceb"/><rect x="5" y="9" width="1" height="3" fill="#0a0a0a"/></svg>

<!-- tool icons -->
<svg class="abs" style="left:0;top:0" width="76" height="418">
 <path d="M28.7,26.2L41.3,37.3L34.6,38L28.7,43.4Z" fill="#b9b9b9"/>
 <!-- track select -->
 <path d="M25.7,60.6L30.6,57V59.2H36.7V62.2H30.6V64.2Z" fill="#b9b9b9"/>
 <rect x="33.3" y="55.6" width="9.4" height="9.4" fill="none" stroke="#b9b9b9" stroke-width="1.3" stroke-dasharray="2.4 1.1" stroke-dashoffset="1.2"/>
 <path d="M46.3,69.2V72H43.5Z" fill="#8a8a8a"/>
 <!-- selected tool -->
 <rect x="20.5" y="75.5" width="27" height="25" rx="2" fill="#141414" stroke="#2e2e2e"/>
 <g fill="#2d8ceb"><path d="M24,87.5L26.9,84.9V86.8H28.8V88.2H26.9V90.1Z"/><path d="M44.2,87.5L41.3,84.9V86.8H39.2V88.2H41.3V90.1Z"/>
 <ellipse cx="28.6" cy="93.7" rx="2.7" ry="2" transform="rotate(-20 28.6 93.7)"/><ellipse cx="35.5" cy="92" rx="2.7" ry="2" transform="rotate(-20 35.5 92)"/>
 <path d="M29.9,93.5V81.7L38.3,79.7V91.8H36.8V83L31.6,84.3V93.5Z"/></g>
 <path d="M46,96V99H43Z" fill="#8a8a8a"/>
 <!-- razor -->
 <g transform="translate(34,115.4) rotate(44.4)"><rect x="-6.9" y="-4.2" width="13.8" height="8.4" rx="0.6" fill="#b9b9b9"/><rect x="-4.4" y="-1.4" width="8.8" height="2.8" fill="#333"/><path d="M-1.2,-1.4H1.2L0,-0.3ZM-1.2,1.4H1.2L0,0.3Z" fill="#b9b9b9"/><path d="M-3.4,-1.4H-2L-2.7,-0.6ZM-3.4,1.4H-2L-2.7,0.6ZM3.4,-1.4H2L2.7,-0.6ZM3.4,1.4H2L2.7,0.6Z" fill="#b9b9b9"/></g>
 <!-- slip -->
 <g fill="#b9b9b9"><rect x="24.2" y="135" width="1.6" height="14"/><rect x="42.2" y="135" width="1.7" height="14"/><path d="M27.2,141.7L31,138.7V141H37.1V138.7L40.9,141.7L37.1,144.7V142.5H31V144.7Z"/></g>
 <path d="M46.3,150V152.8H43.5Z" fill="#8a8a8a"/>
 <!-- pen -->
 <path d="M26,176.4C27,172 29,168.5 31,166.2L34.2,165.3L38.6,169.7L37.6,172.8C35,174.6 31,175.8 26,176.4Z" fill="#b9b9b9"/>
 <path d="M26.3,176.1L32.6,170.4" stroke="#232323" stroke-width="0.9"/>
 <circle cx="33" cy="170.1" r="1.1" fill="#232323"/>
 <rect x="-3" y="-1.9" width="6" height="3.8" rx="0.5" fill="#b9b9b9" transform="translate(38.6,164.5) rotate(45)"/>
 <!-- rect -->
 <rect x="26.5" y="189.8" width="15.2" height="12.2" fill="#454545" stroke="#b9b9b9" stroke-width="1"/>
 <path d="M46.3,204V206.8H43.5Z" fill="#8a8a8a"/>
 <!-- hand -->
 <g stroke="#b9b9b9" stroke-width="1.8" stroke-linecap="round" fill="none">
  <path d="M31.3,218L32.3,225.5"/><path d="M34,216.3L34.3,225.5"/><path d="M36.9,217.2L36.3,225.5"/><path d="M40.2,220.8L38.2,227"/><path d="M26.9,223.8L31,228.5" stroke-width="2.2"/>
 </g>
 <path d="M30.2,223.5H39.2C39.2,228 37.6,231.3 34.5,231.3C32,231.3 30.4,229.6 29,226.5Z" fill="#b9b9b9"/>
 <path d="M46,231V233.8H43.2Z" fill="#8a8a8a"/>
 <!-- T -->
 <path d="M27.1,243.3H41.3V246.8H40V245.1H35.3V255.6H37.4V257.2H31V255.6H32.9V245.1H28.4V246.8H27.1Z" fill="#b9b9b9"/>
 <path d="M46,258.2V261H43.2Z" fill="#8a8a8a"/>
</svg>
</body></html>
